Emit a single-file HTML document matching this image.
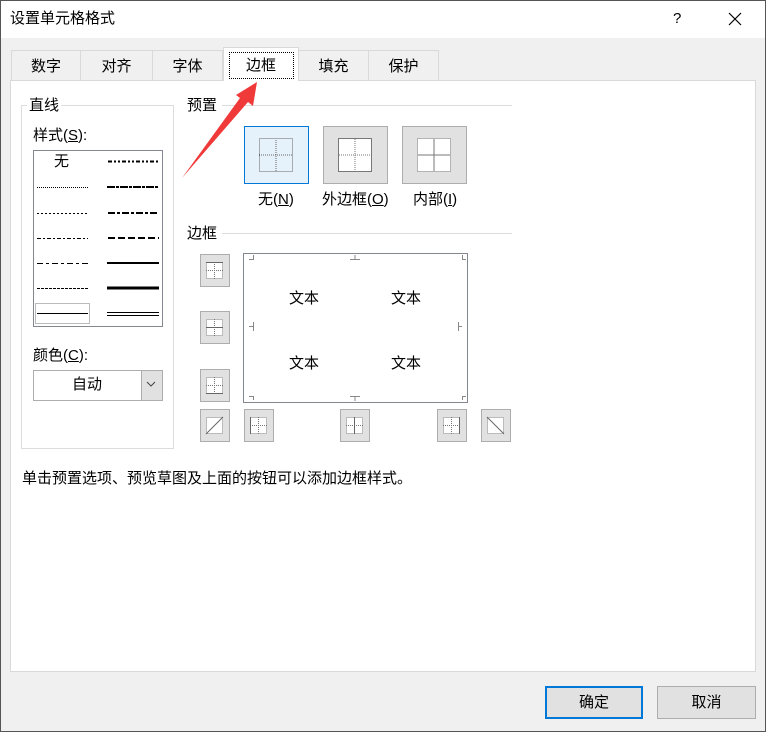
<!DOCTYPE html>
<html><head><meta charset="utf-8">
<style>
*{margin:0;padding:0;box-sizing:border-box}
body{width:766px;height:732px;overflow:hidden;background:#f0f0f0;font-family:"Liberation Sans","Noto Sans CJK SC",sans-serif;font-size:15px;color:#000;position:relative}
.a{position:absolute;white-space:nowrap;line-height:18px}
.tab{position:absolute;top:50px;height:30px;background:#f0f0f0;border:1px solid #d9d9d9;border-bottom:none;text-align:center;line-height:32px}
u{text-decoration:underline}
</style></head><body>
<div class="a" style="left:0;top:0;width:766px;height:38px;background:#fff"></div>
<div class="a" style="left:10px;top:10px">设置单元格格式</div>
<div class="a" style="left:673px;top:10px">?</div>
<svg class="a" style="left:728px;top:12px" width="14" height="14"><path d="M1 1L13 13M13 1L1 13" stroke="#000" stroke-width="1.2"/></svg>

<div class="a" style="left:10px;top:80px;width:746px;height:592px;background:#fff;border:1px solid #d9d9d9"></div>

<div class="tab" style="left:11px;width:70px">数字</div>
<div class="tab" style="left:80px;width:73px">对齐</div>
<div class="tab" style="left:152px;width:71px">字体</div>
<div class="tab" style="left:298px;width:71px">填充</div>
<div class="tab" style="left:368px;width:71px">保护</div>
<div class="tab" style="left:223px;top:47px;height:34px;width:76px;background:#fff;border-color:#d9d9d9;line-height:36px">边框</div>
<div class="a" style="left:229px;top:52px;width:65px;height:27px;border:1px dotted #000"></div>

<div class="a" style="left:21px;top:105px;width:153px;height:344px;border:1px solid #dcdcdc"></div>
<div class="a" style="left:27px;top:97px;background:#fff;padding:0 2px">直线</div>
<div class="a" style="left:33px;top:127px">样式(<u>S</u>):</div>
<div class="a" style="left:33px;top:150px;width:130px;height:177px;border:1px solid #828790;background:#fff"></div>
<div class="a" style="left:54px;top:153px">无</div>
<svg class="a" style="left:0;top:0" width="766" height="732">
 <g stroke="#000">
  <line x1="108" y1="161.5" x2="159" y2="161.5" stroke-width="2" stroke-dasharray="4 2 2 2 2 2"/>
  <line x1="37" y1="187.5" x2="88" y2="187.5" stroke-width="1" stroke-dasharray="1 1"/>
  <line x1="107" y1="187" x2="159" y2="187" stroke-width="2" stroke-dasharray="8 1 3 1"/>
  <line x1="37" y1="213.5" x2="89" y2="213.5" stroke-width="1" stroke-dasharray="2 2"/>
  <line x1="108" y1="213" x2="159" y2="213" stroke-width="2" stroke-dasharray="7 2 3 2"/>
  <line x1="37" y1="238.5" x2="88" y2="238.5" stroke-width="1" stroke-dasharray="4 2 2 2"/>
  <line x1="108" y1="238" x2="159" y2="238" stroke-width="2" stroke-dasharray="7 3"/>
  <line x1="37" y1="263.5" x2="88" y2="263.5" stroke-width="1" stroke-dasharray="6 3 3 3"/>
  <line x1="107" y1="263" x2="159" y2="263" stroke-width="2"/>
  <line x1="37" y1="288.5" x2="88" y2="288.5" stroke-width="1" stroke-dasharray="3 1"/>
  <line x1="107" y1="288" x2="159" y2="288" stroke-width="3"/>
  <line x1="37" y1="313.5" x2="88" y2="313.5" stroke-width="1"/>
  <line x1="107" y1="312.5" x2="159" y2="312.5" stroke-width="1"/>
  <line x1="107" y1="315.5" x2="159" y2="315.5" stroke-width="1"/>
 </g>
 <rect x="35.5" y="303.5" width="54" height="20" fill="none" stroke="#777" stroke-dasharray="1 1"/>
</svg>
<div class="a" style="left:33px;top:347px">颜色(<u>C</u>):</div>
<div class="a" style="left:33px;top:370px;width:130px;height:31px;border:1px solid #adadad;background:#fff"></div>
<div class="a" style="left:72px;top:376px">自动</div>
<div class="a" style="left:141px;top:371px;width:21px;height:29px;background:#e1e1e1;border-left:1px solid #adadad"></div>
<svg class="a" style="left:146px;top:381px" width="10" height="6"><path d="M1 1L5 5L9 1" fill="none" stroke="#444"/></svg>

<div class="a" style="left:187px;top:97px">预置</div>
<div class="a" style="left:222px;top:105px;width:290px;height:1px;background:#dcdcdc"></div>
<div class="a" style="left:187px;top:225px">边框</div>
<div class="a" style="left:222px;top:233px;width:290px;height:1px;background:#dcdcdc"></div>
<div class="a" style="left:258px;top:191px">无(<u>N</u>)</div>
<div class="a" style="left:322px;top:191px">外边框(<u>O</u>)</div>
<div class="a" style="left:413px;top:191px">内部(<u>I</u>)</div>

<div class="a" style="left:243px;top:253px;width:225px;height:150px;border:1px solid #828790;background:#fff"></div>
<div class="a" style="left:289px;top:290px">文本</div>
<div class="a" style="left:391px;top:290px">文本</div>
<div class="a" style="left:289px;top:355px">文本</div>
<div class="a" style="left:391px;top:355px">文本</div>

<div class="a" style="left:22px;top:470px">单击预置选项、预览草图及上面的按钮可以添加边框样式。</div>

<div class="a" style="left:545px;top:686px;width:98px;height:33px;border:2px solid #0078d7;background:#e1e1e1;text-align:center;line-height:29px">确定</div>
<div class="a" style="left:657px;top:686px;width:99px;height:33px;border:1px solid #adadad;background:#e1e1e1;text-align:center;line-height:31px">取消</div>

<svg class="a" style="left:0;top:0" width="766" height="732">
 <defs>
  <g id="dg" fill="none" stroke="#777" stroke-dasharray="1 1">
   <rect x="0.5" y="0.5" width="16" height="16"/>
   <line x1="8.5" y1="0" x2="8.5" y2="17"/><line x1="0" y1="8.5" x2="17" y2="8.5"/>
  </g>
 </defs>
 <rect x="244.5" y="126.5" width="64" height="57" fill="#e5f1fb" stroke="#0078d7"/>
 <g fill="none" stroke="#666" stroke-dasharray="1 1">
  <rect x="259.5" y="138.5" width="33" height="33"/><line x1="276" y1="138" x2="276" y2="172"/><line x1="259" y1="155" x2="293" y2="155"/>
 </g>
 <rect x="323.5" y="126.5" width="64" height="57" fill="#e1e1e1" stroke="#adadad"/>
 <rect x="338.5" y="138.5" width="33" height="33" fill="#fff" stroke="#777"/>
 <g stroke="#777" stroke-dasharray="1 1"><line x1="355" y1="139" x2="355" y2="171"/><line x1="339" y1="155" x2="371" y2="155"/></g>
 <rect x="402.5" y="126.5" width="64" height="57" fill="#e1e1e1" stroke="#adadad"/>
 <rect x="417.5" y="138.5" width="33" height="33" fill="#fff" stroke="#777" stroke-dasharray="1 1"/>
 <g stroke="#777"><line x1="434" y1="139" x2="434" y2="171"/><line x1="418" y1="155" x2="450" y2="155"/></g>

 <g fill="none" stroke="#888">
  <path d="M249 259.5H253.5V255"/><path d="M462.5 255V259.5H466"/>
  <path d="M249 396.5H253.5V400"/><path d="M462.5 400V396.5H466"/>
  <path d="M350 259.5H360M355 255V259.5"/><path d="M350 396.5H360M355 396.5V401"/>
  <path d="M249 326.5H253.5M253.5 322V331"/><path d="M458.5 322V331M458.5 326.5H462"/>
 </g>

 <g fill="#e1e1e1" stroke="#adadad">
  <rect x="200.5" y="254.5" width="29" height="32"/><rect x="200.5" y="311.5" width="29" height="32"/><rect x="200.5" y="369.5" width="29" height="32"/>
  <rect x="200.5" y="409.5" width="29" height="32"/><rect x="244.5" y="409.5" width="29" height="32"/><rect x="340.5" y="409.5" width="29" height="32"/>
  <rect x="437.5" y="409.5" width="29" height="32"/><rect x="481.5" y="409.5" width="29" height="32"/>
 </g>
 <g transform="translate(206,262)"><rect width="17" height="17" fill="#fff"/><use href="#dg"/><line x1="0" y1="0.5" x2="17" y2="0.5" stroke="#666"/></g>
 <g transform="translate(206,319)"><rect width="17" height="17" fill="#fff"/><use href="#dg"/><line x1="0" y1="8.5" x2="17" y2="8.5" stroke="#666"/></g>
 <g transform="translate(206,377)"><rect width="17" height="17" fill="#fff"/><use href="#dg"/><line x1="0" y1="16.5" x2="17" y2="16.5" stroke="#666"/></g>
 <g transform="translate(206,417)"><rect width="17" height="17" fill="#fff"/><rect x="0.5" y="0.5" width="16" height="16" fill="none" stroke="#777" stroke-dasharray="1 1"/><line x1="0" y1="17" x2="17" y2="0" stroke="#666"/></g>
 <g transform="translate(250,417)"><rect width="17" height="17" fill="#fff"/><use href="#dg"/><line x1="0.5" y1="0" x2="0.5" y2="17" stroke="#666"/></g>
 <g transform="translate(346,417)"><rect width="17" height="17" fill="#fff"/><use href="#dg"/><line x1="8.5" y1="0" x2="8.5" y2="17" stroke="#666"/></g>
 <g transform="translate(443,417)"><rect width="17" height="17" fill="#fff"/><use href="#dg"/><line x1="16.5" y1="0" x2="16.5" y2="17" stroke="#666"/></g>
 <g transform="translate(487,417)"><rect width="17" height="17" fill="#fff"/><rect x="0.5" y="0.5" width="16" height="16" fill="none" stroke="#777" stroke-dasharray="1 1"/><line x1="0" y1="0" x2="17" y2="17" stroke="#666"/></g>

 <path d="M182 178L240 98L236 95L257 82L253 106L248 102Z" fill="#f03a3a"/>

 <rect x="0.5" y="0.5" width="765" height="731" fill="none" stroke="#555"/>
</svg>
</body></html>
